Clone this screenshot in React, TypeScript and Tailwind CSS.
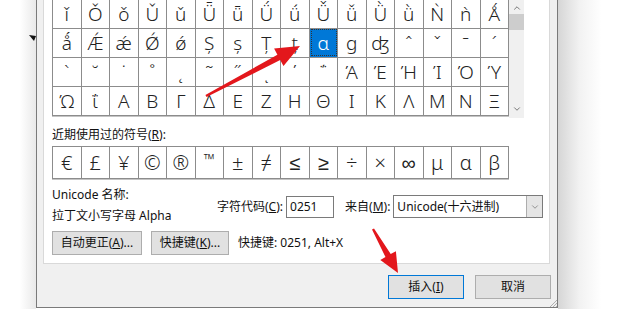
import { ChevronDown, ChevronUp } from 'lucide-react'

const rows = [
  ['ǐ', 'Ǒ', 'ǒ', 'Ǔ', 'ǔ', 'Ǖ', 'ǖ', 'Ǘ', 'ǘ', 'Ǚ', 'ǚ', 'Ǜ', 'ǜ', 'Ǹ', 'ǹ', 'Ǻ'],
  ['ǻ', 'Ǽ', 'ǽ', 'Ǿ', 'ǿ', 'Ș', 'ș', 'Ț', 'ț', 'ɑ', 'ɡ', 'ʤ', 'ˆ', 'ˇ', 'ˉ', 'ˊ'],
  ['ˋ', '˘', '˙', '˚', '˛', '˜', '˝', 'ͺ', '΄', '΅', 'Ά', 'Έ', 'Ή', 'Ί', 'Ό', 'Ύ'],
  ['Ώ', 'ΐ', 'Α', 'Β', 'Γ', 'Δ', 'Ε', 'Ζ', 'Η', 'Θ', 'Ι', 'Κ', 'Λ', 'Μ', 'Ν', 'Ξ'],
]

const recent = ['€', '£', '¥', '©', '®', '™', '±', '≠', '≤', '≥', '÷', '×', '∞', 'μ', 'α', 'β']

function Btn({ children, primary }: { children: React.ReactNode; primary?: boolean }) {
  return (
    <div
      className={
        'flex h-[24px] items-center justify-center border bg-[#e1e1e1] ' +
        (primary ? 'border-[#0078d7]' : 'border-[#adadad]')
      }
    >
      {children}
    </div>
  )
}

export default function App() {
  return (
    <div className="relative flex h-[309px] w-[620px] overflow-hidden bg-white font-['Noto_Sans','Noto_Sans_CJK_SC',sans-serif] text-[12px] leading-[16px] text-[#111]">
      {/* backdrop left of the dialog */}
      <div className="relative w-[36px] shrink-0 bg-gradient-to-r from-white from-55% to-[#e9e9e9]">
        <svg className="absolute left-[29px] top-[35px]" width="7" height="6" viewBox="0 0 7 6">
          <polygon points="0,0 7,1 5,6" fill="#111" />
        </svg>
      </div>

      {/* dialog */}
      <div className="relative flex h-[308px] w-[522px] shrink-0 flex-col border-x border-b border-[#7a7a7a] bg-[#f0f0f0] pl-[6px] pr-[7px]">
        {/* tab page */}
        <div className="flex h-[264px] flex-col border-x border-b border-[#d9d9d9] bg-white pl-[8px]">
          {/* symbol grid + scrollbar */}
          <div className="-mt-px flex h-[119px]">
            <div className="h-[117px] w-[457px] border-b border-l border-[#8c8c8c] shadow-[0_1px_0_#c4c4c4]">
              <div className="grid grid-cols-16">
                {rows.flat().map((c, i) => (
                  <div
                    key={i}
                    className={
                      "flex h-[29px] items-center justify-center border-r border-t border-[#8c8c8c] font-['Noto_Sans','DejaVu_Sans',sans-serif] text-[19px] font-light leading-none " +
                      (i === 25 ? 'bg-[#0078d7] text-white outline-1 outline-dotted outline-offset-[-2px] outline-[#333]' : 'text-[#222]')
                    }
                  >
                    {c}
                  </div>
                ))}
              </div>
            </div>
            <div className="flex w-[15px] flex-col bg-[#f0f0f0]">
              <div className="flex h-[15px] items-center justify-center pt-[2px]">
                <ChevronUp size={10} strokeWidth={2} color="#606060" />
              </div>
              <div className="h-[16px] bg-[#cdcdcd]" />
              <div className="flex-1" />
              <div className="flex h-[15px] items-center justify-center pb-[4px]">
                <ChevronDown size={10} strokeWidth={2} color="#606060" />
              </div>
            </div>
          </div>

          {/* recent symbols */}
          <div className="mt-[9px]">
            近期使用过的符号(<span className="underline">R</span>):
          </div>
          <div className="mt-[3px] grid w-[457px] grid-cols-16 border-y border-l border-[#8c8c8c] shadow-[0_1px_0_#c4c4c4]">
            {recent.map((c, i) => (
              <div
                key={i}
                className={
                  "flex h-[31px] justify-center border-r border-[#8c8c8c] font-['Noto_Sans','DejaVu_Sans',sans-serif] font-light leading-none text-[#222] " +
                  (c === '™' ? 'items-start pt-[5px] text-[15px]' : 'items-center text-[20px]')
                }
              >
                {c}
              </div>
            ))}
          </div>

          {/* info */}
          <div className="mt-[8px] flex">
            <div className="flex w-[165px] flex-col gap-[5px]">
              <div>Unicode 名称:</div>
              <div>拉丁文小写字母 Alpha</div>
            </div>
            <div className="mt-[8px] flex h-[23px] items-center">
              <span>
                字符代码(<span className="underline">C</span>):
              </span>
              <div className="ml-[3px] flex h-[22px] w-[48px] items-center border border-[#7a7a7a] bg-white pl-[3px]">
                0251
              </div>
              <span className="ml-[11px]">
                来自(<span className="underline">M</span>):
              </span>
              <div className="ml-[3px] flex h-[23px] w-[150px] items-center border border-[#7a7a7a] bg-white">
                <span className="flex-1 pl-[3px]">Unicode(十六进制)</span>
                <div className="flex h-full w-[16px] items-center justify-center border-l border-[#adadad] bg-[#e5e5e5]">
                  <ChevronDown size={10} strokeWidth={1.5} color="#606060" />
                </div>
              </div>
            </div>
          </div>

          {/* buttons inside page */}
          <div className="mt-[7px] flex items-center">
            <div className="w-[90px]">
              <Btn>
                自动更正(<span className="underline">A</span>)...
              </Btn>
            </div>
            <div className="ml-[9px] w-[78px]">
              <Btn>
                快捷键(<span className="underline">K</span>)...
              </Btn>
            </div>
            <span className="ml-[9px]">快捷键: 0251, Alt+X</span>
          </div>
        </div>

        {/* footer */}
        <div className="-mr-px mt-[11px] flex justify-end gap-[11px]">
          <div className="w-[76px]">
            <Btn primary>
              插入(<span className="underline">I</span>)
            </Btn>
          </div>
          <div className="w-[76px]">
            <Btn>取消</Btn>
          </div>
        </div>

        {/* resize grip */}
        <svg className="absolute bottom-0 right-0" width="8" height="8" viewBox="0 0 8 8">
          <line x1="1" y1="8" x2="8" y2="1" stroke="#b0b0b0" />
          <line x1="4" y1="8" x2="8" y2="4" stroke="#b0b0b0" />
          <line x1="7" y1="8" x2="8" y2="7" stroke="#b0b0b0" />
        </svg>
      </div>

      {/* shadow right of the dialog */}
      <div className="flex-1 bg-gradient-to-r from-[#d6d6d6] via-[#f2f2f2] via-35% to-white to-70%" />

      {/* red annotation arrows */}
      <svg className="pointer-events-none absolute left-0 top-0" width="620" height="309">
        <polygon
          points="205.4,94.9 277.4,54.7 274.1,48.5 300,46 283.5,66.1 280.2,60.0 206.6,97.1"
          fill="#e3171c"
        />
        <polygon
          points="374.0,228.4 390.7,254.1 395.9,251.2 398,273 380.3,260.0 385.5,257.1 372.0,229.6"
          fill="#e3171c"
        />
      </svg>
    </div>
  )
}
